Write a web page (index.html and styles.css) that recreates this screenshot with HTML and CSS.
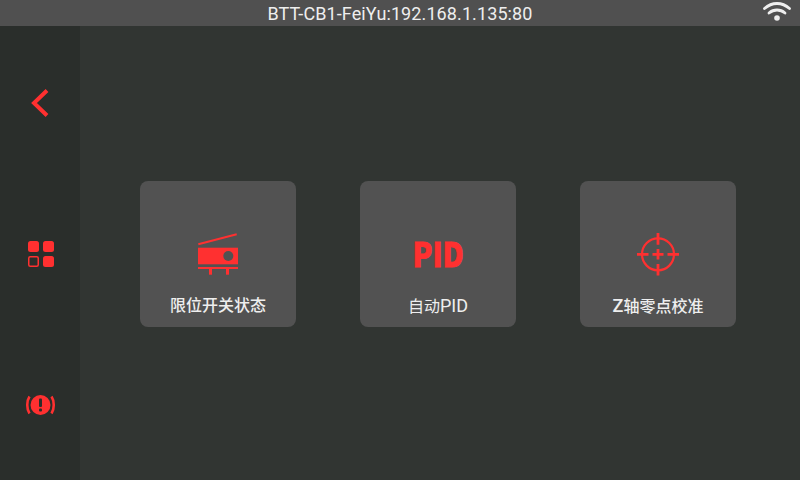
FILE: index.html
```html
<!DOCTYPE html>
<html lang="en">
<head>
    <meta charset="UTF-8">
    <meta name="viewport" content="width=device-width, initial-scale=1.0">
    <title>BTT-CB1-FeiYu</title>
    <link rel="stylesheet" href="styles.css">
</head>
<body>
<div class="screen">
    <!-- Status bar -->
    <div class="topbar">
        <span class="host">BTT-CB1-FeiYu:192.168.1.135:80</span>
        <svg class="wifi" width="28" height="22" viewBox="0 0 28 22">
            <path d="M1.500 8.500C9 1.800 19 1.800 26.500 8.500" fill="none" stroke="#eeeeee" stroke-width="2.800" stroke-linecap="round"/>
            <path d="M6 13C10.800 9 17.200 9 22 13" fill="none" stroke="#eeeeee" stroke-width="2.800" stroke-linecap="round"/>
            <circle cx="14" cy="18" r="2.800" fill="#eeeeee"/>
        </svg>
    </div>

    <div class="body">
        <!-- Side navigation -->
        <div class="sidebar">
            <div class="side-item side-back">
                <svg width="24" height="32" viewBox="0 0 24 32">
                    <path d="M19 3.500L6 16L19 28.500" fill="none" stroke="#ff3030" stroke-width="4"/>
                </svg>
            </div>
            <div class="side-item">
                <svg width="28" height="28" viewBox="0 0 28 28">
                    <rect x="2" y="1" width="11" height="11" rx="2.500" fill="#ff3030"/>
                    <rect x="17" y="1" width="11" height="11" rx="2.500" fill="#ff3030"/>
                    <rect x="2.750" y="16.750" width="9.500" height="9.500" rx="1.500" fill="none" stroke="#ff3030" stroke-width="1.500"/>
                    <rect x="17" y="16" width="11" height="11" rx="2.500" fill="#ff3030"/>
                </svg>
            </div>
            <div class="side-item">
                <svg width="32" height="24" viewBox="0 0 32 24">
                    <circle cx="16.500" cy="12" r="10" fill="#ff3030"/>
                    <rect x="15" y="5.500" width="3" height="8.500" rx="1" fill="#2a2e2b"/>
                    <rect x="15" y="15.500" width="3" height="3" rx="1" fill="#2a2e2b"/>
                    <path d="M5.500 3.500C2.500 8 2.500 16 5.500 20.500" fill="none" stroke="#ff3030" stroke-width="2.600"/>
                    <path d="M27.500 3.500C30.500 8 30.500 16 27.500 20.500" fill="none" stroke="#ff3030" stroke-width="2.600"/>
                </svg>
            </div>
        </div>

        <!-- Menu cards -->
        <div class="main">
            <div class="card">
                <div class="card-icon">
                    <svg width="48" height="48" viewBox="0 0 48 48">
                        <path d="M4.300 14.300L42.700 4.300" stroke="#ff3030" stroke-width="2"/>
                        <rect x="4" y="17.700" width="40" height="16.600" fill="#ff3030"/>
                        <circle cx="34.300" cy="26" r="5" fill="#525252"/>
                        <rect x="4" y="37" width="40" height="2" fill="#ff3030"/>
                        <rect x="15" y="38" width="3" height="6.700" fill="#ff3030"/>
                        <rect x="32" y="38" width="3" height="6.700" fill="#ff3030"/>
                    </svg>
                </div>
                <div class="card-label">限位开关状态</div>
            </div>
            <div class="card">
                <div class="card-icon"><span class="pid">PID</span></div>
                <div class="card-label card-label-thin">自动<span class="latin">PID</span></div>
            </div>
            <div class="card">
                <div class="card-icon">
                    <svg width="48" height="48" viewBox="0 0 48 48">
                        <circle cx="24" cy="24.300" r="16" fill="none" stroke="#ff3030" stroke-width="2.200"/>
                        <path d="M3 24.300H14.500M33.500 24.300H45M24 3V14.700M24 34V45.500M18.500 24.300H29.500M24 19V29.500" fill="none" stroke="#ff3030" stroke-width="2.800"/>
                    </svg>
                </div>
                <div class="card-label"><span class="latin">Z</span>轴零点校准</div>
            </div>
        </div>
    </div>
</div>
</body>
</html>
```

FILE: styles.css
```css
body {
    margin: 0;
    font-family: Roboto, "Noto Sans CJK SC", sans-serif;
    color: #eeeeee;
    background-color: #313532;
}

.screen {
    width: 800px;
    height: 480px;
    display: flex;
    flex-direction: column;
    overflow: hidden;
}

.topbar {
    height: 26px;
    flex-shrink: 0;
    display: flex;
    align-items: center;
    justify-content: center;
    background-color: #505050;
    position: relative;
}

.host {
    font-size: 18px;
    letter-spacing: 0.1px;
}

.wifi {
    position: absolute;
    right: 9px;
    top: 0;
}

.body {
    flex: 1;
    display: flex;
}

.sidebar {
    width: 80px;
    flex-shrink: 0;
    display: flex;
    flex-direction: column;
    background-color: #2a2e2b;
}

.side-item {
    flex: 1;
    display: flex;
    align-items: center;
    justify-content: center;
}

.side-back {
    padding-top: 1px;
}

.main {
    flex: 1;
    display: flex;
    align-items: center;
    gap: 64px;
    padding-left: 60px;
    padding-top: 2px;
}

.card {
    width: 156px;
    height: 146px;
    box-sizing: border-box;
    padding-top: 49px;
    border-radius: 8px;
    background-color: #525252;
    display: flex;
    flex-direction: column;
    align-items: center;
}

.card-icon {
    height: 48px;
    display: flex;
    align-items: center;
    justify-content: center;
}

.card-label {
    margin-top: 18px;
    font-size: 16px;
    line-height: 20px;
    font-weight: 500;
}

.card-label-thin {
    font-weight: 400;
}

.latin {
    font-size: 18px;
}

.pid {
    font-family: "Noto Sans CJK SC", sans-serif;
    font-size: 33px;
    font-weight: 900;
    line-height: 48px;
    color: #ff3030;
    margin-bottom: 3px;
    transform: scaleX(0.88);
    -webkit-text-stroke: 0.8px #ff3030;
}
```
